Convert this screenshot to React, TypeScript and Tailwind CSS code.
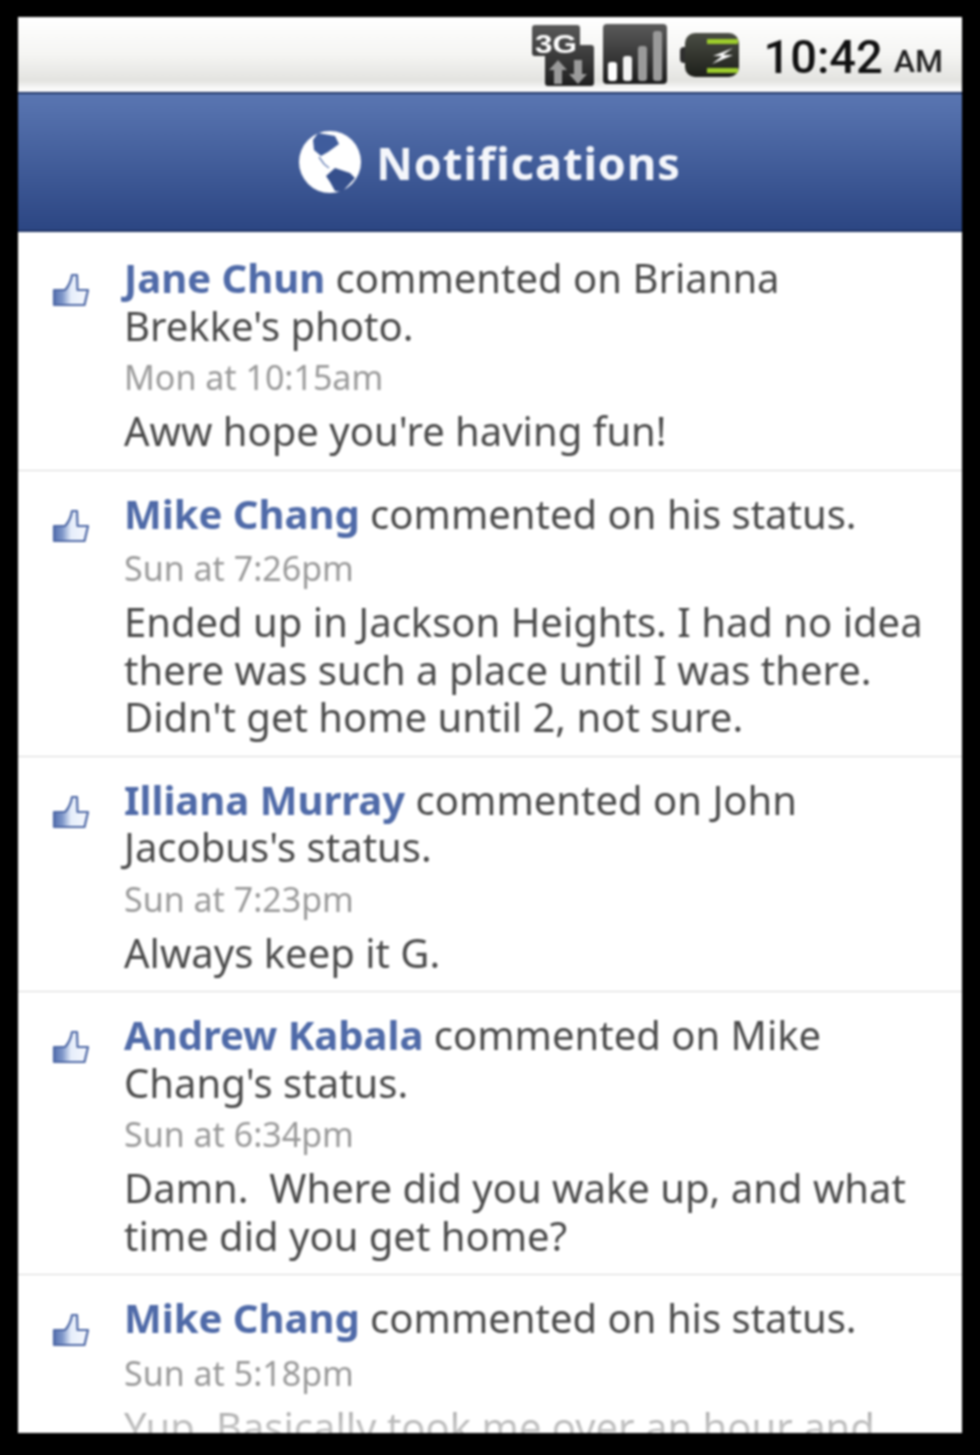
const ROWS = [
  { name: "Jane Chun", action: "commented on Brianna Brekke's photo.", time: "Mon at 10:15am", body: ["Aww hope you're having fun!"], twoLine: true },
  { name: "Mike Chang", action: "commented on his status.", time: "Sun at 7:26pm", body: ["Ended up in Jackson Heights. I had no idea", "there was such a place until I was there.", "Didn't get home until 2, not sure."], twoLine: false },
  { name: "Illiana Murray", action: "commented on John Jacobus's status.", time: "Sun at 7:23pm", body: ["Always keep it G."], twoLine: true },
  { name: "Andrew Kabala", action: "commented on Mike Chang's status.", time: "Sun at 6:34pm", body: ["Damn.  Where did you wake up, and what", "time did you get home?"], twoLine: true },
  { name: "Mike Chang", action: "commented on his status.", time: "Sun at 5:18pm", body: ["Yup. Basically took me over an hour and"], twoLine: false },
];

function ThumbIcon() {
  return (
    <svg width="38" height="36" viewBox="0 0 38 36" className="shrink-0">
      <defs>
        <linearGradient id="cuff" x1="0" y1="0" x2="1" y2="0">
          <stop offset="0" stopColor="#5470b0" />
          <stop offset="0.25" stopColor="#7f97c9" />
          <stop offset="0.5" stopColor="#e6eefb" />
          <stop offset="1" stopColor="#f6f8fd" />
        </linearGradient>
      </defs>
      <path d="M2 18h11c3-3 6-9 7-15h5l.5 15H36l-3.500 15H2z" fill="url(#cuff)" stroke="#4f69a6" strokeWidth="2.200" strokeLinejoin="round" />
    </svg>
  );
}

function GlobeIcon() {
  return (
    <svg width="62" height="62" viewBox="0 0 62 62" className="shrink-0">
      <circle cx="31" cy="31" r="31" fill="#ffffff" />
      <path d="M19 2l17 3 4 8-11 8-7 4-7-6-1-10z" fill="#3f5c9c" />
      <path d="M27 45l9-8 15 5 5 5-13 14-7-1-5-9z" fill="#354f8c" />
      <path d="M20 26l5 7 5 4" fill="none" stroke="#6f86b8" strokeWidth="1.500" />
    </svg>
  );
}

function StatusIcons() {
  return (
    <>
      <svg width="62" height="62" viewBox="0 0 62 62" className="shrink-0">
        <defs>
          <linearGradient id="darkbox" x1="0" y1="0" x2="0" y2="1">
            <stop offset="0" stopColor="#585858" />
            <stop offset="1" stopColor="#1f1f1f" />
          </linearGradient>
        </defs>
        <path d="M3 1h42a3 3 0 0 1 3 3v17h11a3 3 0 0 1 3 3v35a3 3 0 0 1-3 3H16a3 3 0 0 1-3-3V32H3a3 3 0 0 1-3-3V4a3 3 0 0 1 3-3z" fill="url(#darkbox)" />
        <text x="3" y="29" fontFamily="Liberation Sans, sans-serif" fontWeight="700" fontSize="25" fill="#ffffff" textLength="42" lengthAdjust="spacingAndGlyphs">3G</text>
        <path d="M26 36l9 10h-5v14h-8V46h-5z" fill="#9a9a9a" />
        <path d="M46 60l-9-10h5V36h8v14h5z" fill="#9a9a9a" />
      </svg>
      <svg width="64" height="61" viewBox="0 0 64 61" className="ml-[9px] shrink-0">
        <defs>
          <linearGradient id="sigbox" x1="0" y1="0" x2="0" y2="1">
            <stop offset="0" stopColor="#5a5a5a" />
            <stop offset="1" stopColor="#1c1c1c" />
          </linearGradient>
        </defs>
        <rect width="64" height="60" rx="4" fill="url(#sigbox)" />
        <rect x="5" y="38" width="9" height="19" rx="3" fill="#ffffff" />
        <rect x="20" y="32" width="9" height="25" rx="3" fill="#f4f4f4" />
        <rect x="35" y="22" width="9" height="35" rx="3" fill="#9a9a9a" />
        <rect x="50" y="7" width="9" height="50" rx="3" fill="#9a9a9a" />
      </svg>
      <svg width="62" height="46" viewBox="0 0 62 46" className="ml-[13px] shrink-0">
        <defs>
          <linearGradient id="batbox" x1="0" y1="0" x2="0" y2="1">
            <stop offset="0" stopColor="#4a4d44" />
            <stop offset="1" stopColor="#1d1f1a" />
          </linearGradient>
        </defs>
        <rect x="0" y="15" width="10" height="16" rx="4" fill="#2e2e2e" />
        <rect x="5" y="1" width="54" height="44" rx="10" fill="url(#batbox)" />
        <rect x="27" y="7" width="31" height="5" fill="#9ccc2c" />
        <rect x="27" y="36" width="31" height="5" fill="#9ccc2c" />
        <path d="M53 16L33 24h9l-10 8 21-9h-10z" fill="#ffffff" />
      </svg>
    </>
  );
}

function Row({ row }: { row: (typeof ROWS)[number] }) {
  return (
    <div className="flex shrink-0 border-b border-[#d9d9d9] pt-[19px] pb-[15px] first:pt-[22px] last:border-b-0">
      <div className="ml-[34px] mt-[18px] w-[72px] shrink-0">
        <ThumbIcon />
      </div>
      <div className="w-[800px]">
        <div className="text-[40px] leading-[47.5px] text-[#4a4a4a]">
          <span className="font-bold text-[#4f6aa8]">{row.name}</span> {row.action}
        </div>
        <div className={row.twoLine ? "mt-[8px] text-[34px] leading-[40px] text-[#999999]" : "mt-[11px] text-[34px] leading-[40px] text-[#999999]"}>
          {row.time}
        </div>
        <div className="mt-[10px] whitespace-pre text-[40px] leading-[47.5px] text-[#4a4a4a]">
          {row.body.map((line) => (
            <div key={line}>{line}</div>
          ))}
        </div>
      </div>
    </div>
  );
}

export default function App() {
  return (
    <div className="h-[1455px] w-[980px] overflow-hidden bg-black pl-[18px] pt-[17px] font-['Noto_Sans',sans-serif]">
      <div className="relative flex h-[1416px] w-[944px] flex-col overflow-hidden bg-white blur-[0.8px]">
        <div className="flex h-[75px] shrink-0 items-center justify-end bg-[linear-gradient(#ffffff_0%,#f5f5f3_50%,#e3e3e0_85%,#fafafa_96%)] pr-[19px]">
          <StatusIcons />
          <span className="ml-[22px] mt-[3px] font-['Roboto',sans-serif] text-[47px] font-medium leading-none text-[#111111]">10:42</span>
          <span className="ml-[11px] mt-[12px] font-['Roboto',sans-serif] text-[32px] font-medium leading-none text-[#222222]">AM</span>
        </div>
        <div className="flex h-[140px] shrink-0 items-center justify-center gap-[15px] border-y-2 border-y-[#1f3566] bg-gradient-to-b from-[#5a76b2] to-[#2c4683]">
          <GlobeIcon />
          <span className="text-[45px] font-bold leading-none tracking-[1px] text-[#f4f6fb]">Notifications</span>
        </div>
        <div className="flex flex-col">
          {ROWS.map((row, i) => (
            <Row key={i} row={row} />
          ))}
        </div>
        {/* list fades out under the bottom edge */}
        <div className="absolute inset-x-0 bottom-0 h-[30px] bg-gradient-to-b from-white/50 to-white/70" />
      </div>
    </div>
  );
}
